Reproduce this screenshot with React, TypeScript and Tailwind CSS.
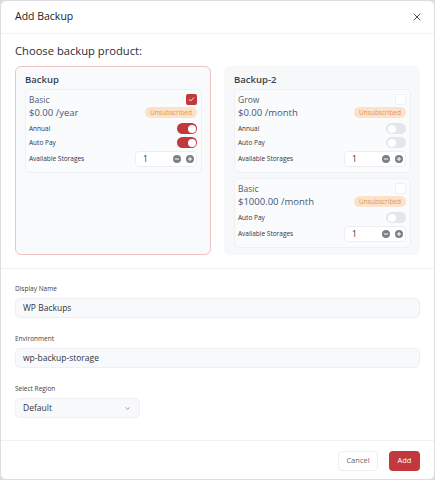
import { X, ChevronDown, Check, Minus, Plus } from "lucide-react";

type Plan = {
  name: string;
  price: string;
  period: string;
  selected: boolean;
  annual?: boolean;
  autoPay: boolean;
};

type Product = {
  title: string;
  active: boolean;
  plans: Plan[];
};

const products: Product[] = [
  {
    title: "Backup",
    active: true,
    plans: [
      { name: "Basic", price: "$0.00", period: "/year", selected: true, annual: true, autoPay: true },
    ],
  },
  {
    title: "Backup-2",
    active: false,
    plans: [
      { name: "Grow", price: "$0.00", period: "/month", selected: false, annual: false, autoPay: false },
      { name: "Basic", price: "$1000.00", period: "/month", selected: false, autoPay: false },
    ],
  },
];

function Toggle({ on }: { on: boolean }) {
  return (
    <div
      className={
        on
          ? "flex h-[11px] w-[20px] items-center justify-end rounded-full bg-[#c1383d] px-[1.5px]"
          : "flex h-[11px] w-[20px] items-center justify-start rounded-full bg-[#e3e6eb] px-[1.5px]"
      }
    >
      <div className="h-[8px] w-[8px] rounded-full bg-white" />
    </div>
  );
}

function Stepper() {
  return (
    <div className="flex h-[16px] w-[62px] items-center rounded-[4px] border border-[#eceef2] bg-white pl-[7px] pr-[2px]">
      <span className="flex-1 text-[8.5px] text-[#333]">1</span>
      <div className="flex items-center gap-[5px]">
        <span className="flex h-[8px] w-[8px] items-center justify-center rounded-full bg-[#7b7e86]">
          <Minus size={6} strokeWidth={4} color="#fff" />
        </span>
        <span className="flex h-[8px] w-[8px] items-center justify-center rounded-full bg-[#7b7e86]">
          <Plus size={6} strokeWidth={4} color="#fff" />
        </span>
      </div>
    </div>
  );
}

function PlanCard({ plan }: { plan: Plan }) {
  return (
    <div className="flex flex-col rounded-[5px] border border-[#eef0f3] bg-[#fafbfc] pt-[4px] pb-[5px] pl-[3px] pr-[4px]">
      <div className="flex items-start justify-between">
        <div className="flex flex-col">
          <span className="h-[12px] text-[8.5px] leading-[12px] text-[#525a68]">{plan.name}</span>
          <span className="h-[13px] text-[9.5px] leading-[13px] text-[#47557a]">
            {plan.price} {plan.period}
          </span>
        </div>
        <div className="flex flex-col items-end gap-[2px]">
          {plan.selected ? (
            <span className="flex h-[11px] w-[11px] items-center justify-center rounded-[2px] bg-[#c1383d]">
              <Check size={7} strokeWidth={3} color="#fff" />
            </span>
          ) : (
            <span className="h-[11px] w-[11px] rounded-[2px] border border-[#f0f1f4] bg-white" />
          )}
          <span className="flex h-[11px] items-center rounded-full bg-[#fbe2c8] px-[5px] text-[6.5px] text-[#e0955a]">
            Unsubscribed
          </span>
        </div>
      </div>
      <div className="mt-[4px] flex flex-col gap-[3px]">
        {plan.annual !== undefined && (
          <div className="flex items-center justify-between">
            <span className="text-[6.5px] text-[#2f3440]">Annual</span>
            <Toggle on={plan.annual} />
          </div>
        )}
        <div className="flex items-center justify-between">
          <span className="text-[6.5px] text-[#2f3440]">Auto Pay</span>
          <Toggle on={plan.autoPay} />
        </div>
        <div className="flex items-center justify-between">
          <span className="text-[6.5px] text-[#2f3440]">Available Storages</span>
          <Stepper />
        </div>
      </div>
    </div>
  );
}

function ProductCard({ product }: { product: Product }) {
  return (
    <div
      className={
        product.active
          ? "flex flex-col rounded-[6px] border border-[#efc3c3] bg-[#f9fafc] pt-[6px] pb-[6px] pl-[9px] pr-[8px]"
          : "flex flex-col rounded-[6px] border border-[#f7f8fa] bg-[#f7f8fa] pt-[6px] pb-[6px] pl-[9px] pr-[8px]"
      }
    >
      <span className="text-[9.5px] font-semibold leading-[14px] text-[#3a3f4a]">{product.title}</span>
      <div className="mt-[2px] flex flex-col gap-[5px]">
        {product.plans.map((p) => (
          <PlanCard key={p.name + p.price} plan={p} />
        ))}
      </div>
    </div>
  );
}

function Field({ label, value }: { label: string; value: string }) {
  return (
    <div className="flex flex-col gap-[5px]">
      <span className="text-[6.5px] leading-[9px] text-[#3a3f4a]">{label}</span>
      <div className="flex h-[20px] items-center rounded-[5px] border border-[#eef0f3] bg-[#f8f9fb] px-[7px] text-[8.5px] text-[#2f3440]">
        {value}
      </div>
    </div>
  );
}

export default function App() {
  return (
    <div className="h-[480px] w-[435px] bg-[#dcdde2]" style={{ fontFamily: '"Open Sans", sans-serif' }}>
      <div className="flex h-full w-full flex-col overflow-hidden rounded-[6px] border border-[#dcdde2] bg-white">
        <div className="flex h-[33px] shrink-0 items-center justify-between border-b border-[#f3f3f5] pl-[14px] pr-[11px]">
          <span className="text-[10.5px] text-[#222]">Add Backup</span>
          <X size={12} strokeWidth={1.7} color="#333" />
        </div>

        <div className="flex flex-col border-b border-[#f1f1f3] px-[14px] pt-[9px] pb-[13px]">
          <span className="text-[11.2px] leading-[15px] text-[#2a2e36]">Choose backup product:</span>
          <div className="mt-[8px] grid grid-cols-2 gap-[13px]">
            {products.map((p) => (
              <ProductCard key={p.title} product={p} />
            ))}
          </div>
        </div>

        <div className="flex flex-col gap-[16px] border-b border-[#f1f1f3] px-[14px] pt-[15px] pb-[22px]">
          <Field label="Display Name" value="WP Backups" />
          <Field label="Environment" value="wp-backup-storage" />
          <div className="flex flex-col gap-[5px]">
            <span className="text-[6.5px] leading-[9px] text-[#3a3f4a]">Select Region</span>
            <div className="flex h-[20px] w-[125px] items-center justify-between rounded-[5px] border border-[#eef0f3] bg-[#f8f9fb] pl-[7px] pr-[8px] text-[8.5px] text-[#2f3440]">
              <span>Default</span>
              <ChevronDown size={7} strokeWidth={2.5} color="#777" />
            </div>
          </div>
        </div>

        <div className="flex justify-end gap-[11px] px-[14px] pt-[10px]">
          <button className="flex h-[20px] w-[40px] items-center justify-center rounded-[4px] border border-[#eceef1] bg-white text-[7.5px] text-[#666]">
            Cancel
          </button>
          <button className="flex h-[20px] w-[31px] items-center justify-center rounded-[4px] bg-[#c1383d] text-[7.5px] text-white">
            Add
          </button>
        </div>
      </div>
    </div>
  );
}
